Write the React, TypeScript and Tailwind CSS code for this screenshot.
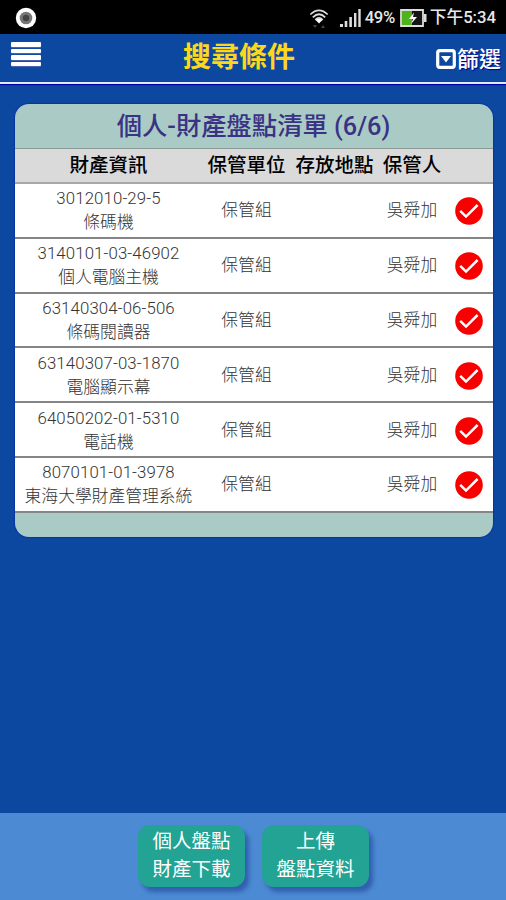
interface Asset {
  code: string
  name: string
  unit: string
  keeper: string
}

const assets: Asset[] = [
  { code: '3012010-29-5', name: '條碼機', unit: '保管組', keeper: '吳舜加' },
  { code: '3140101-03-46902', name: '個人電腦主機', unit: '保管組', keeper: '吳舜加' },
  { code: '63140304-06-506', name: '條碼閱讀器', unit: '保管組', keeper: '吳舜加' },
  { code: '63140307-03-1870', name: '電腦顯示幕', unit: '保管組', keeper: '吳舜加' },
  { code: '64050202-01-5310', name: '電話機', unit: '保管組', keeper: '吳舜加' },
  { code: '8070101-01-3978', name: '東海大學財產管理系統', unit: '保管組', keeper: '吳舜加' },
]

function StatusBar() {
  return (
    <div className="flex h-[34px] shrink-0 items-center bg-black pl-[15px] pr-[10px] pt-px text-[#e8e8e8]">
      <svg className="h-[22px] w-[22px]" viewBox="0 0 22 22">
        <circle cx="11" cy="11" r="10.2" fill="#fff" />
        <circle cx="11" cy="11" r="6.3" fill="#777" />
        <circle cx="11" cy="11" r="3.2" fill="#444" />
      </svg>
      <div className="flex-1" />
      {/* wifi */}
      <svg className="mr-[11px] mt-[2px] h-[22px] w-[20px]" viewBox="0 0 20 22" fill="none" stroke="#ddd" strokeWidth="1.7">
        <path d="M1.3 6.5Q10-1.7 18.7 6.5M3.8 9.3Q10 3.2 16.2 9.3M6.3 11.8Q10 8 13.7 11.8" />
        <path d="M6.6 12Q10 9.5 13.4 12L10 15.5Z" fill="#fff" stroke="none" />
        <path d="M4 17h4L6 20zM12 20l2-3 2 3z" fill="#444" stroke="none" />
      </svg>
      {/* signal */}
      <svg className="mr-[4px] h-[18px] w-[21px]" viewBox="0 0 21 18" fill="#ddd">
        <path d="M0 15h3v3H0zM4.7 12h2.6v6H4.7zM9.3 8h2.6v10H9.3zM14 4h2.4v14H14zM18.3 0h2.4v18h-2.4z" />
      </svg>
      <span className="w-[32px] whitespace-nowrap text-[16.7px] font-medium leading-[22px] tracking-[-0.4px]">49%</span>
      <svg className="ml-[3px] mr-[3px] h-[18px] w-[27px]" viewBox="0 0 27 18">
        <path d="M1 1h22v16H1z" fill="#151515" stroke="#ddd" strokeWidth="1.8" />
        <path d="M2 2h10v14H2z" fill="#4fb31c" />
        <path d="M24 5h2.5v8H24z" fill="#ddd" />
        <path d="M14 3.5L9 10h4l-2 5 6-7h-4z" fill="#fff" />
      </svg>
      <span className="whitespace-nowrap text-[16.7px] font-medium leading-[22px]">下午5:34</span>
    </div>
  )
}

function Header() {
  return (
    <div className="flex h-[50px] shrink-0 justify-between border-b-2 border-[#e2e8ff] shadow-[0_1px_1px_#0000a0]">
      <div className="flex w-[94px] flex-col gap-[2px] pl-[11px] pt-[8px]">
        {[0, 1, 2, 3].map((i) => (
          <div key={i} className="h-[4.5px] w-[30px] rounded-[1px] bg-white shadow-[0_1px_1px_#5263b5]" />
        ))}
      </div>
      <div className="pt-[4px] text-[28px] font-bold leading-[40px] text-[#fbd81c]">搜尋條件</div>
      <div className="flex w-[122px] items-start justify-end pr-[5px] pt-[10px] text-[22px] font-medium leading-[32px] text-white [text-shadow:1px_1px_1px_#00008b]">
        <svg className="mr-px mt-[5px] h-[20px] w-[20px]" viewBox="0 0 20 20">
          <rect x="1.7" y="1.7" width="16.6" height="16.6" rx="2" fill="none" stroke="#fff" strokeWidth="3.2" />
          <path d="M5 7h10l-5 6.5z" fill="#fff" />
        </svg>
        篩選
      </div>
    </div>
  )
}

function CheckMark() {
  return (
    <svg className="ml-[8px] mt-[2px] h-[28px] w-[28px]" viewBox="0 0 28 28">
      <circle cx="14" cy="14" r="13.8" fill="#f80000" />
      <path d="M5.2 13.8l5.8 5.8L22.6 8" fill="none" stroke="#fff" strokeWidth="2.5" />
    </svg>
  )
}

function ActionButton({ lines }: { lines: string[] }) {
  return (
    <button className="h-[62px] w-[107px] rounded-[12px] bg-[#22a394] text-[19.5px] leading-[28px] text-white shadow-[4px_5px_4px_#315faf]">
      {lines.map((line) => (
        <div key={line}>{line}</div>
      ))}
    </button>
  )
}

export default function App() {
  return (
    <div className="flex h-[900px] w-[506px] flex-col overflow-hidden bg-[#0d48a0] font-[Roboto,'Noto_Sans_CJK_TC',sans-serif]">
      <StatusBar />
      <Header />

      <div className="ml-[15px] mt-[20px] w-[478px] overflow-hidden rounded-[14px] bg-[#aacbc5] text-center shadow-[0_0_1px_1px_#0734a6]">
        <div className="h-[45px] border-b border-[#8a9896] pr-[1px] text-[25.3px] font-medium leading-[45px] text-[#3a3284]">
          個人-財產盤點清單 (6/6)
        </div>
        <div className="grid h-[35px] grid-cols-[187px_89px_87px_69px_46px] border-b-2 border-[#a8a8a8] bg-[#dadada] text-[19.5px] font-medium leading-[33px] text-black">
          <div>財產資訊</div>
          <div>保管單位</div>
          <div>存放地點</div>
          <div className="pr-px">保管人</div>
        </div>
        {assets.map((asset) => (
          <div
            key={asset.code}
            className="grid h-[54.8px] grid-cols-[187px_89px_87px_69px_46px] items-center border-b-2 border-[#858585] bg-white text-[16.8px] font-light leading-[24px] text-[#333]"
          >
            <div>
              <div className="tracking-[0.13px]">{asset.code}</div>
              <div>{asset.name}</div>
            </div>
            <div>{asset.unit}</div>
            <div />
            <div className="pr-px">{asset.keeper}</div>
            <CheckMark />
          </div>
        ))}
        <div className="h-[24px]" />
      </div>

      <div className="mt-auto flex h-[87px] shrink-0 justify-center gap-[17px] bg-[#4c8ad3] pl-[1px] pt-[12px]">
        <ActionButton lines={['個人盤點', '財產下載']} />
        <ActionButton lines={['上傳', '盤點資料']} />
      </div>
    </div>
  )
}
